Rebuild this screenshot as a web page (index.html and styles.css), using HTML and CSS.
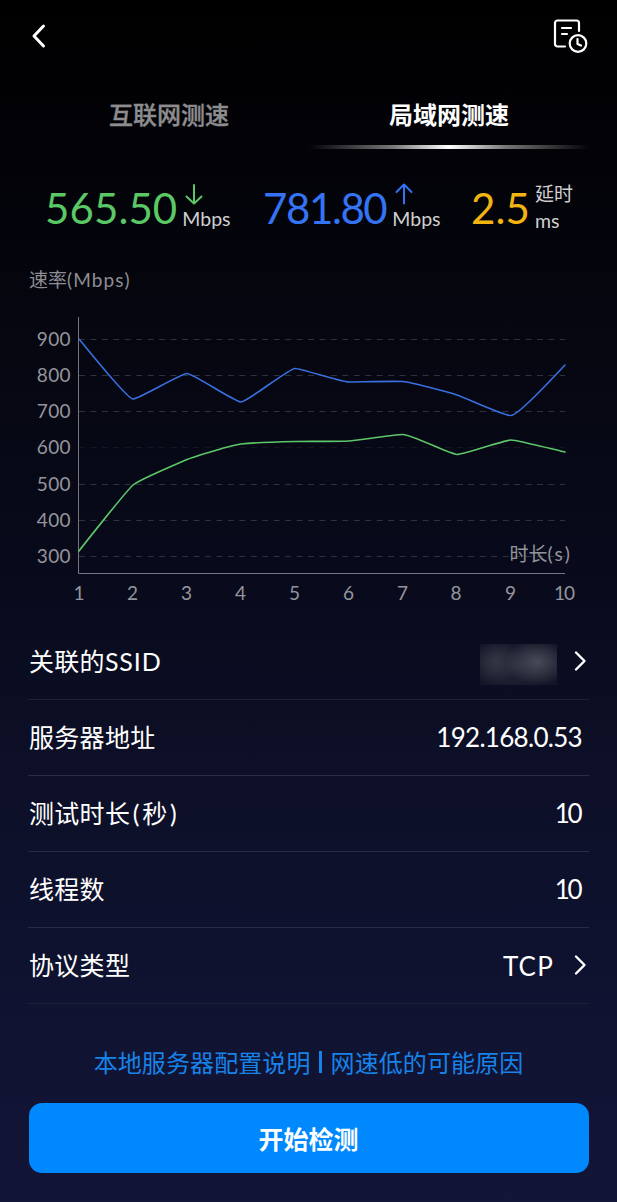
FILE: index.html
```html
<!DOCTYPE html>
<html lang="zh-CN">
<head>
<meta charset="utf-8">
<title>局域网测速</title>
<link rel="stylesheet" href="styles.css">
</head>
<body>
<main class="screen">
  <header class="topbar">
    <svg class="back" width="16" height="26" viewBox="0 0 16 26"><path d="M13.500 3 4 13 13.500 23"/></svg>
    <svg class="history" width="36" height="36" viewBox="0 0 36 36">
      <path d="M13 28.500H5.500a2.500 2.500 0 0 1-2.500-2.500V5a2.500 2.500 0 0 1 2.500-2.500h19a2.500 2.500 0 0 1 2.500 2.500V13M10 10h9M10 16h5"/>
      <circle cx="26" cy="25.500" r="8.300"/><path d="M25.500 21v5l3.500 1.500"/>
    </svg>
  </header>
  <nav class="tabs">
    <div class="tab">互联网测速</div>
    <div class="tab active">局域网测速</div>
  </nav>
  <section class="stats">
    <div class="stat down">
      <span class="value">565.50</span>
      <div class="side">
        <svg class="arrow" width="18" height="22" viewBox="0 0 18 22"><path d="M9 2v18M1.500 13.500 9 20.500l7.500-7"/></svg>
        <span class="unit">Mbps</span>
      </div>
    </div>
    <div class="stat up">
      <span class="value">781.80</span>
      <div class="side">
        <svg class="arrow" width="18" height="22" viewBox="0 0 18 22"><path d="M9 20.500V1.500M1.500 9 9 1.500 16.500 9"/></svg>
        <span class="unit">Mbps</span>
      </div>
    </div>
    <div class="stat delay">
      <span class="value">2.5</span>
      <div class="side"><span class="name">延时</span><span class="unit">ms</span></div>
    </div>
  </section>
  <h2 class="chart-title">速率<span class="chart-unit">(Mbps)</span></h2>
  <svg class="chart" width="617" height="314" viewBox="0 300 617 314">
    <g class="grid">
      <path d="M79 339.500H565M79 375.500H565M79 411.500H565M79 484.500H565M79 520.500H565M79 556.500H565"/>
      <path class="faint" d="M79 447.500H565"/>
    </g>
    <path class="axis" d="M78.500 317V573.500H565"/>
    <g class="ylabels">
      <text x="71" y="345.500">900</text><text x="71" y="381.500">800</text><text x="71" y="417.500">700</text>
      <text x="71" y="454">600</text><text x="71" y="490.500">500</text><text x="71" y="526.500">400</text><text x="71" y="562.500">300</text>
    </g>
    <g class="xlabels">
      <text x="79" y="600">1</text><text x="132.500" y="600">2</text><text x="186.500" y="600">3</text><text x="240.500" y="600">4</text><text x="294.500" y="600">5</text>
      <text x="348.500" y="600">6</text><text x="402.500" y="600">7</text><text x="456" y="600">8</text><text x="510.500" y="600">9</text><text x="564" y="600" class="ten">10</text>
    </g>
    <text class="xtitle" x="509.500" y="560.500">时长<tspan class="seconds">(s)</tspan></text>
    <path class="line upload" d="M79 339C83 343.500 127 399 133 399S181 373.500 187 373.500 235 402 241 402 289 368.500 295 368.500 341 382 349 382 395 380.900 403 381.500 449 392.600 457 395 503 415.500 511 415.500 561 369 565 365"/>
    <path class="line download" d="M79 551C82 547 127 490 133 485S180 462.500 187 459.500 233 444.800 241 444 287 441.700 295 441.500 341 441.600 349 441 395 434.500 403 434.500 451 454.500 457 454.500 505 440 511 440 560 451 565 452"/>
  </svg>
  <section class="settings">
    <div class="row"><span class="label">关联的<span class="latin">SSID</span></span><span class="masked"></span><svg class="chevron" width="14" height="22" viewBox="0 0 14 22"><path d="M2 2.500 10.500 11 2 19.500"/></svg></div>
    <div class="row"><span class="label">服务器地址</span><span class="setting address">192.168.0.53</span></div>
    <div class="row"><span class="label">测试时长<span class="paren">(</span>秒<span class="paren">)</span></span><span class="setting count">10</span></div>
    <div class="row"><span class="label">线程数</span><span class="setting count">10</span></div>
    <div class="row"><span class="label">协议类型</span><span class="setting linked">TCP</span><svg class="chevron" width="14" height="22" viewBox="0 0 14 22"><path d="M2 2.500 10.500 11 2 19.500"/></svg></div>
  </section>
  <div class="links"><span>本地服务器配置说明</span><i class="divider"></i><span>网速低的可能原因</span></div>
  <button class="start">开始检测</button>
</main>
</body>
</html>
```

FILE: styles.css
```css
* { box-sizing: border-box; }
body {
  margin: 0;
  font-family: Lato, "Noto Sans CJK SC", sans-serif;
  color: #fff;
  background: #131538;
}
svg { display: block; fill: none; stroke-linecap: round; stroke-linejoin: round; }
.screen {
  width: 617px;
  height: 1202px;
  overflow: hidden;
  display: flex;
  flex-direction: column;
  background: linear-gradient(#000 0, #020207 130px, #05060f 320px, #080a1b 560px, #0c0f25 740px, #0f122f 960px, #131538 1202px);
}
.topbar {
  height: 72px;
  flex: none;
  display: flex;
  align-items: center;
  justify-content: space-between;
  padding: 0 29px 0 30px;
}
.topbar svg { stroke: #fff; }
.back { stroke-width: 3; }
.history { stroke-width: 2.2; }
.tabs {
  height: 77px;
  flex: none;
  display: grid;
  grid-template-columns: 280px 280px;
  padding-left: 29px;
}
.tab {
  padding-top: 25px;
  text-align: center;
  font-size: 24px;
  line-height: 36px;
  font-weight: 500;
  color: #8d8d90;
  -webkit-text-stroke: 0.4px #8d8d90;
}
.tab.active {
  color: #fff;
  font-weight: 700;
  -webkit-text-stroke: 0;
  background: linear-gradient(90deg, transparent, #777 30%, #fff 50%, #777 70%, transparent) bottom / 100% 4px no-repeat;
}
.stats {
  height: 100px;
  flex: none;
  display: flex;
  padding: 32px 0 0 45px;
}
.stat { display: flex; height: 60px; }
.down { width: 218px; color: #5bc866; }
.up { width: 208px; color: #3474f4; }
.delay { color: #f3b411; }
.value { font-size: 42px; line-height: 54px; letter-spacing: 0.1px; }
.up .value { letter-spacing: -1.4px; }
.side { padding: 2px 0 0 5px; display: flex; flex-direction: column; }
.arrow { stroke: currentColor; stroke-width: 2; margin-left: 3px; }
.up .side { padding-left: 6px; }
.unit { font-size: 19.5px; line-height: 26px; color: #d0d0d2; margin-top: 1px; }
.name { font-size: 19px; line-height: 22px; color: #d0d0d2; }
.delay .unit { margin-top: 3px; }
.chart-title {
  margin: 0;
  height: 51px;
  flex: none;
  padding: 17px 0 0 29px;
  font-size: 19px;
  line-height: 28px;
  font-weight: 400;
  color: #8d8d93;
}
.chart-unit { letter-spacing: 1.1px; }
.chart { flex: none; font-size: 19px; }
.chart text { fill: #94959c; }
.grid { stroke: #30323b; stroke-dasharray: 6 5.450; stroke-linecap: butt; }
.grid .faint { stroke: #151720; }
.axis { stroke: #74757d; stroke-linejoin: miter; stroke-linecap: butt; }
.ylabels { text-anchor: end; letter-spacing: 0.4px; }
.xlabels { text-anchor: middle; }
.ten { letter-spacing: -1px; }
.seconds { letter-spacing: 2px; }
.line { stroke-width: 1.6; }
.upload { stroke: #3970df; }
.download { stroke: #5dc76a; }
.settings { margin: 10px 28px 0; flex: none; }
.row {
  height: 76px;
  display: flex;
  align-items: center;
  border-bottom: 1px solid #292c42;
  font-size: 25px;
  letter-spacing: 0.3px;
}
.row:first-child, .row:last-child { border-color: #1d2036; }
.label { padding: 0 0 3px 1px; }
.latin { letter-spacing: 0.9px; }
.setting { margin-left: auto; margin-right: 6px; padding-bottom: 2px; font-size: 26px; }
.address { letter-spacing: -0.7px; margin-right: 7px; }
.count { letter-spacing: -2.5px; margin-right: 9px; }
.setting.linked { margin-right: 20px; letter-spacing: 1.2px; padding-bottom: 0; }
.paren { padding: 0 2.500px; }
.chevron { stroke: #fff; stroke-width: 2.4; margin-right: 1px; margin-bottom: 1px; }
.masked {
  width: 77px;
  height: 41px;
  margin: 5px 17px 0 auto;
  background:
    radial-gradient(ellipse 32px 22px at 57px 18px, #484956, #48495600),
    radial-gradient(ellipse 24px 22px at 16px 18px, #353644, #35364400),
    radial-gradient(ellipse 52px 28px at 38px 22px, #262837, #12152700),
    #121527;
}
.links {
  height: 99px;
  flex: none;
  padding: 16px 0 0;
  display: flex;
  align-items: center;
  justify-content: center;
  font-size: 24px;
  letter-spacing: 0.1px;
  color: #1783e8;
}
.divider { width: 3px; height: 22px; margin: 0 9px 0 8px; background: #1783e8; }
.start {
  width: 560px;
  height: 70px;
  flex: none;
  margin-left: 28.500px;
  padding: 0;
  border: 0;
  border-radius: 13px;
  background: #0088ff;
  color: #fff;
  font: 700 25px Lato, "Noto Sans CJK SC", sans-serif;
}
```
